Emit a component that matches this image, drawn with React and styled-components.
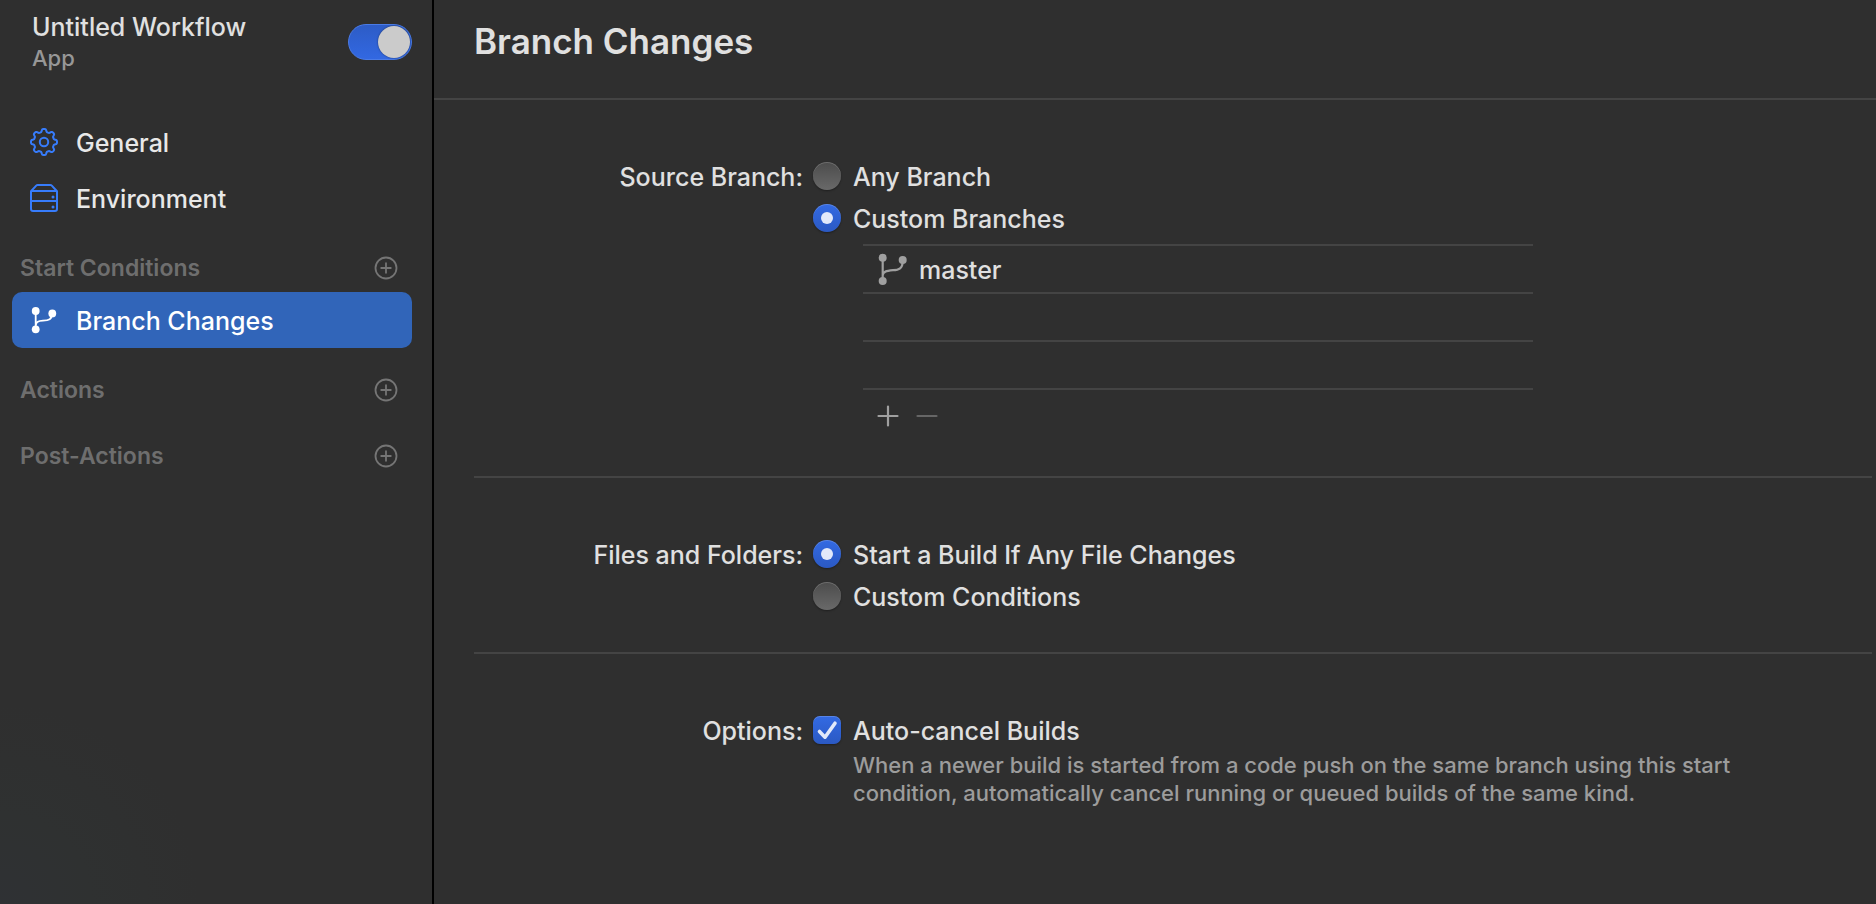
import React from "react";
import styled, { createGlobalStyle } from "styled-components";

const GlobalStyle = createGlobalStyle`
  *, *::before, *::after { box-sizing: border-box; }
  body {
    margin: 0;
    background: #2f2f2f;
    color: #e0e0e0;
    font-family: Inter, "Liberation Sans", sans-serif;
    font-size: 25px;
    font-weight: 500;
    line-height: 32px;
  }
  h1, h2, p, ul { margin: 0; padding: 0; font-weight: inherit; }
  ul { list-style: none; }
  button { font: inherit; color: inherit; background: none; border: 0; padding: 0; }
`;

const Window = styled.div`
  display: flex;
  min-height: 100vh;
`;

const Sidebar = styled.aside`
  flex: 0 0 434px;
  padding: 10px 20px 24px 12px;
  border-right: 2px solid #000;
  background: radial-gradient(circle at 0 100%, #2f3134 0, #2f3131 90px, #2f2f2f 200px);
`;

const WorkflowHeader = styled.header`
  display: flex;
  align-items: center;
  justify-content: space-between;
  height: 64px;
  margin-bottom: 40px;
  padding-left: 20px;
`;

const WorkflowName = styled.div`
  line-height: 32px;
`;

const WorkflowKind = styled.div`
  color: #979797;
  font-size: 22px;
  line-height: 30px;
`;

const Toggle = styled.input`
  appearance: none;
  display: flex;
  width: 64px;
  height: 36px;
  margin: 0;
  padding: 1px;
  border: 1px solid #4a7be6;
  border-radius: 18px;
  background: linear-gradient(#2d5cc6, #3268e2);
  &::before {
    content: "";
    width: 32px;
    height: 32px;
    border-radius: 50%;
    background: #cbcbcb;
    box-shadow: 0 0 2px rgba(0, 0, 0, 0.5);
  }
  &:checked { justify-content: flex-end; }
  &:not(:checked) { background: #4b4b4b; border-color: #5c5c5c; }
`;

const Caption = styled.span`
  padding-top: 2px;
`;

const NavItem = styled.button`
  display: flex;
  align-items: center;
  gap: 18px;
  width: 100%;
  height: 56px;
  padding: 0 18px;
  border-radius: 10px;
  text-align: left;
  color: ${(p) => (p.$active ? "#fff" : "#e8e8e8")};
  background: ${(p) => (p.$active ? "#3165b9" : "transparent")};
  svg { color: ${(p) => (p.$active ? "#fff" : "#377cfb")}; }
`;

const GroupHeader = styled.div`
  display: flex;
  align-items: center;
  justify-content: space-between;
  height: 48px;
  margin-top: 18px;
  padding: 0 14px 0 8px;
  color: #6e6e6e;
`;

const GroupTitle = styled.h2`
  font-size: 23px;
  font-weight: 600;
`;

const IconButton = styled.button`
  display: flex;
  color: ${(p) => p.$color};
`;

const Main = styled.main`
  flex: 1;
  min-width: 0;
`;

const TitleBar = styled.header`
  display: flex;
  height: 100px;
  padding: 19px 40px 0;
  border-bottom: 2px solid #444;
`;

const Title = styled.h1`
  font-size: 35px;
  font-weight: 600;
  line-height: 44px;
`;

const Section = styled.section`
  display: grid;
  grid-template-columns: 329px minmax(0, 1fr);
  column-gap: 10px;
  margin: 0 4px 0 40px;
  padding: 55px 0 35px;
  border-bottom: ${(p) => (p.$last ? "0" : "2px solid #444")};
`;

const SectionLabel = styled.div`
  line-height: 44px;
  text-align: right;
`;

const Option = styled.label`
  display: flex;
  align-items: center;
  gap: 12px;
  height: 42px;
`;

const Radio = styled.input`
  appearance: none;
  flex: none;
  display: grid;
  place-items: center;
  width: 28px;
  height: 28px;
  margin: 0;
  border-radius: 50%;
  background: linear-gradient(#4c4c4c, #696969);
  box-shadow: inset 0 1px 0 rgba(255, 255, 255, 0.18), 0 1px 2px rgba(0, 0, 0, 0.35);
  &:checked { background: linear-gradient(#336ae3, #2b59c3); }
  &:checked::before {
    content: "";
    width: 12px;
    height: 12px;
    border-radius: 50%;
    background: #e2e9fa;
  }
`;

const CheckboxFrame = styled.span`
  display: grid;
  width: 28px;
  height: 28px;
  > * { grid-area: 1 / 1; }
  svg { pointer-events: none; z-index: 1; }
`;

const Checkbox = styled.input`
  appearance: none;
  width: 28px;
  height: 28px;
  margin: 0;
  border-radius: 7px;
  background: linear-gradient(#4c4c4c, #696969);
  box-shadow: inset 0 1px 0 rgba(255, 255, 255, 0.18), 0 1px 2px rgba(0, 0, 0, 0.35);
  &:checked { background: linear-gradient(#336ae3, #2b59c3); }
  &:not(:checked) + svg { visibility: hidden; }
`;

const BranchList = styled.ul`
  max-width: 670px;
  margin: 5px 0 0 50px;
  border-top: 2px solid #444;
`;

const BranchRow = styled.li`
  display: flex;
  align-items: center;
  gap: 10px;
  height: 48px;
  padding-left: 14px;
  border-bottom: 2px solid #444;
  svg { color: #a0a0a0; }
`;

const ListTools = styled.div`
  display: flex;
  align-items: center;
  gap: 17px;
  height: 51px;
  margin-left: 64px;
`;

const HelpText = styled.p`
  max-width: 960px;
  padding-left: 40px;
  color: #9c9c9c;
  font-size: 22px;
  line-height: 28px;
`;

const gearPath = (() => {
  const steps = 160;
  const points = [];
  for (let i = 0; i < steps; i += 1) {
    const a = (i / steps) * Math.PI * 2;
    const r = 11.6 + 1.45 * Math.tanh(2.2 * Math.cos(8 * a));
    points.push(`${(14 + r * Math.cos(a)).toFixed(2)} ${(14 + r * Math.sin(a)).toFixed(2)}`);
  }
  return `M${points.join("L")}Z`;
})();

const GearIcon = () => (
  <svg width="28" height="28" viewBox="0 0 28 28" fill="none" stroke="currentColor" strokeWidth="2" strokeLinejoin="round" aria-hidden="true">
    <path d={gearPath} />
    <circle cx="14" cy="14" r="4.2" />
  </svg>
);

const ServerIcon = () => (
  <svg width="28" height="28" viewBox="0 0 28 28" fill="none" stroke="currentColor" strokeWidth="2" strokeLinejoin="round" aria-hidden="true">
    <path d="M1 7.2 6.2 1.6Q6.8 1 7.6 1H20.4Q21.2 1 21.8 1.6L27 7.2V25Q27 27 25 27H3Q1 27 1 25ZM1 7H27M1 17H27" />
    <g fill="currentColor" stroke="none">
      <circle cx="23" cy="13" r="1.5" />
      <circle cx="23" cy="23" r="1.5" />
    </g>
  </svg>
);

const BranchIcon = () => (
  <svg width="28" height="28" viewBox="0 0 28 28" fill="none" stroke="currentColor" strokeWidth="1.8" aria-hidden="true">
    <path d="M5.7 5V23M5.7 20C5.9 15.5 8.5 14.9 13 14.7 18.5 14.5 22.3 13.6 22.3 7" />
    <g fill="currentColor" stroke="none">
      <circle cx="5.7" cy="5" r="3.9" />
      <circle cx="22.3" cy="7.4" r="3.9" />
      <circle cx="5.7" cy="23.3" r="3.9" />
    </g>
  </svg>
);

const BranchLargeIcon = () => (
  <svg width="32" height="32" viewBox="0 0 32 32" fill="none" stroke="currentColor" strokeWidth="2.2" aria-hidden="true">
    <path d="M5.7 5V28M5.7 22C6.2 18.6 9 18 16 17.2 22 17 25.7 15.5 25.7 8" />
    <g fill="currentColor" stroke="none">
      <circle cx="5.7" cy="4.8" r="4" />
      <circle cx="25.7" cy="7" r="4" />
      <circle cx="5.7" cy="28" r="4" />
    </g>
  </svg>
);

const AddCircleIcon = () => (
  <svg width="24" height="24" viewBox="0 0 24 24" fill="none" stroke="currentColor" strokeWidth="1.8" strokeLinecap="round" aria-hidden="true">
    <circle cx="12" cy="12" r="10.5" />
    <path d="M12 7.2V16.8M7.2 12H16.8" />
  </svg>
);

const PlusIcon = () => (
  <svg width="22" height="22" viewBox="0 0 22 22" fill="none" stroke="currentColor" strokeWidth="2.2" strokeLinecap="round" aria-hidden="true">
    <path d="M11 1.5V20.5M1.5 11H20.5" />
  </svg>
);

const MinusIcon = () => (
  <svg width="22" height="22" viewBox="0 0 22 22" fill="none" stroke="currentColor" strokeWidth="2.2" strokeLinecap="round" aria-hidden="true">
    <path d="M1.5 11H20.5" />
  </svg>
);

const CheckIcon = () => (
  <svg width="28" height="28" viewBox="0 0 28 28" fill="none" stroke="#e2e9fa" strokeWidth="3.6" strokeLinecap="round" strokeLinejoin="round" aria-hidden="true">
    <path d="M6.5 15.5 12 21.2 22 7.2" />
  </svg>
);

const NavEntry = ({ icon, children, active }) => (
  <NavItem type="button" $active={active} aria-current={active ? "page" : undefined}>
    {icon}
    <Caption>{children}</Caption>
  </NavItem>
);

const Group = ({ title, children }) => (
  <section>
    <GroupHeader>
      <GroupTitle>{title}</GroupTitle>
      <IconButton type="button" $color="#757575" aria-label={`Add to ${title}`}>
        <AddCircleIcon />
      </IconButton>
    </GroupHeader>
    {children}
  </section>
);

const RadioOption = ({ children, ...input }) => (
  <Option>
    <Radio type="radio" {...input} />
    <Caption>{children}</Caption>
  </Option>
);

export default function App() {
  return (
    <>
      <GlobalStyle />
      <Window>
        <Sidebar>
          <WorkflowHeader>
            <div>
              <WorkflowName id="workflow-name">Untitled Workflow</WorkflowName>
              <WorkflowKind>App</WorkflowKind>
            </div>
            <Toggle type="checkbox" role="switch" defaultChecked aria-labelledby="workflow-name" />
          </WorkflowHeader>
          <nav>
            <NavEntry icon={<GearIcon />}>General</NavEntry>
            <NavEntry icon={<ServerIcon />}>Environment</NavEntry>
            <Group title="Start Conditions">
              <NavEntry icon={<BranchIcon />} active>Branch Changes</NavEntry>
            </Group>
            <Group title="Actions" />
            <Group title="Post-Actions" />
          </nav>
        </Sidebar>
        <Main>
          <TitleBar>
            <Title>Branch Changes</Title>
          </TitleBar>
          <Section>
            <SectionLabel id="source-label">Source Branch:</SectionLabel>
            <div role="radiogroup" aria-labelledby="source-label">
              <RadioOption name="source">Any Branch</RadioOption>
              <RadioOption name="source" defaultChecked>Custom Branches</RadioOption>
              <BranchList>
                <BranchRow>
                  <BranchLargeIcon />
                  <Caption>master</Caption>
                </BranchRow>
                <BranchRow />
                <BranchRow />
              </BranchList>
              <ListTools>
                <IconButton type="button" $color="#a0a0a0" aria-label="Add branch"><PlusIcon /></IconButton>
                <IconButton type="button" $color="#666" aria-label="Remove branch" disabled><MinusIcon /></IconButton>
              </ListTools>
            </div>
          </Section>
          <Section>
            <SectionLabel id="files-label">Files and Folders:</SectionLabel>
            <div role="radiogroup" aria-labelledby="files-label">
              <RadioOption name="files" defaultChecked>Start a Build If Any File Changes</RadioOption>
              <RadioOption name="files">Custom Conditions</RadioOption>
            </div>
          </Section>
          <Section $last>
            <SectionLabel id="options-label">Options:</SectionLabel>
            <div role="group" aria-labelledby="options-label">
              <Option>
                <CheckboxFrame>
                  <Checkbox type="checkbox" defaultChecked aria-describedby="auto-cancel-help" />
                  <CheckIcon />
                </CheckboxFrame>
                <Caption>Auto-cancel Builds</Caption>
              </Option>
              <HelpText id="auto-cancel-help">
                When a newer build is started from a code push on the same branch using this start condition, automatically cancel running or queued builds of the same kind.
              </HelpText>
            </div>
          </Section>
        </Main>
      </Window>
    </>
  );
}
